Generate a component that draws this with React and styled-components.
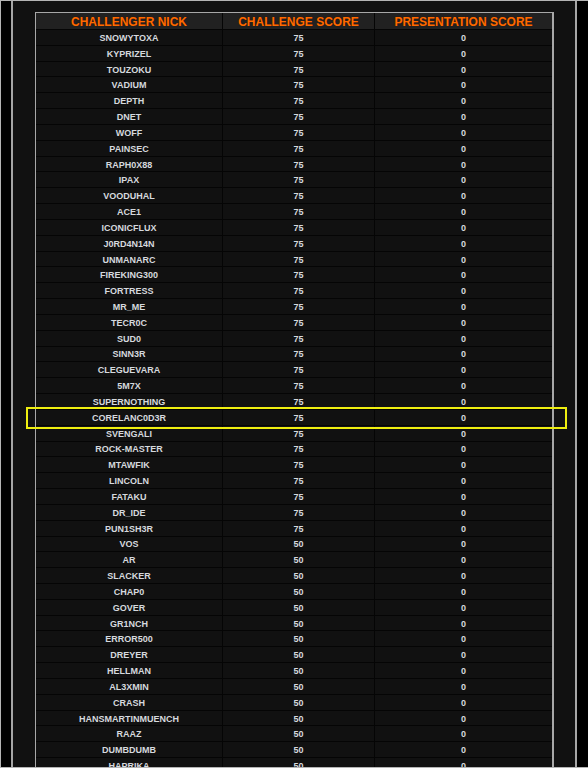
import React from "react";
import styled, { createGlobalStyle } from "styled-components";

const GlobalStyle = createGlobalStyle`
  html, body {
    margin: 0;
    padding: 0;
    background: #000;
  }
`;

const challengers = [
  ["SNOWYTOXA", 75], ["KYPRIZEL", 75], ["TOUZOKU", 75], ["VADIUM", 75],
  ["DEPTH", 75], ["DNET", 75], ["WOFF", 75], ["PAINSEC", 75],
  ["RAPH0X88", 75], ["IPAX", 75], ["VOODUHAL", 75], ["ACE1", 75],
  ["ICONICFLUX", 75], ["J0RD4N14N", 75], ["UNMANARC", 75], ["FIREKING300", 75],
  ["FORTRESS", 75], ["MR_ME", 75], ["TECR0C", 75], ["SUD0", 75],
  ["SINN3R", 75], ["CLEGUEVARA", 75], ["5M7X", 75], ["SUPERNOTHING", 75],
  ["CORELANC0D3R", 75], ["SVENGALI", 75], ["ROCK-MASTER", 75], ["MTAWFIK", 75],
  ["LINCOLN", 75], ["FATAKU", 75], ["DR_IDE", 75], ["PUN1SH3R", 75],
  ["VOS", 50], ["AR", 50], ["SLACKER", 50], ["CHAP0", 50],
  ["GOVER", 50], ["GR1NCH", 50], ["ERROR500", 50], ["DREYER", 50],
  ["HELLMAN", 50], ["AL3XMIN", 50], ["CRASH", 50], ["HANSMARTINMUENCH", 50],
  ["RAAZ", 50], ["DUMBDUMB", 50], ["HAPRIKA", 50],
];

const Frame = styled.div`
  position: relative;
  width: 588px;
  height: 768px;
  box-sizing: border-box;
  border: 1px solid #b4b4b4;
  border-right: none;
  overflow: hidden;
  padding-left: 10px;
  background: #000;
  font-family: "Liberation Sans", Arial, sans-serif;
`;

const Panel = styled.div`
  width: 566px;
  height: 100%;
  box-sizing: border-box;
  border-left: 2px solid #a6a6a6;
  border-right: 2px solid #a6a6a6;
  background: #111;
  padding: 11px 0 0 22px;
`;

const Table = styled.div`
  width: 519px;
  box-sizing: border-box;
  border: 1px solid #a8a8a8;
  border-right-width: 2px;
  border-bottom: none;
`;

const Row = styled.div`
  display: grid;
  grid-template-columns: 187px 152px 177px;
  height: ${(p) => (p.head ? "17px" : "15.83px")};
  box-sizing: border-box;
  border-bottom: 1px solid #050505;
  background: ${(p) => (p.head ? "#212121" : "#111")};
`;

const Cell = styled.div`
  display: flex;
  align-items: center;
  justify-content: center;
  padding-top: 1px;
  border-right: 1px solid #050505;
  white-space: nowrap;
  font-weight: bold;
  font-size: ${(p) => (p.head ? "12px" : "9px")};
  color: ${(p) => (p.head ? "#ff6a00" : "#d6d9de")};
  text-shadow: ${(p) => (p.head ? "0 0 1px #3a1500" : "none")};
  &:last-child {
    border-right: none;
  }
`;

const Highlight = styled.div`
  position: absolute;
  left: 25px;
  top: 406px;
  width: 541px;
  height: 22px;
  box-sizing: border-box;
  border: 2px solid #eeee10;
  pointer-events: none;
`;

const App = () => {
  return (
    <>
      <GlobalStyle />
      <Frame>
        <Panel>
          <Table>
            <Row head>
              <Cell head>CHALLENGER NICK</Cell>
              <Cell head>CHALLENGE SCORE</Cell>
              <Cell head>PRESENTATION SCORE</Cell>
            </Row>
            {challengers.map(([nick, score]) => (
              <Row key={nick}>
                <Cell>{nick}</Cell>
                <Cell>{score}</Cell>
                <Cell>0</Cell>
              </Row>
            ))}
          </Table>
        </Panel>
        <Highlight />
      </Frame>
    </>
  );
};

export default App;
